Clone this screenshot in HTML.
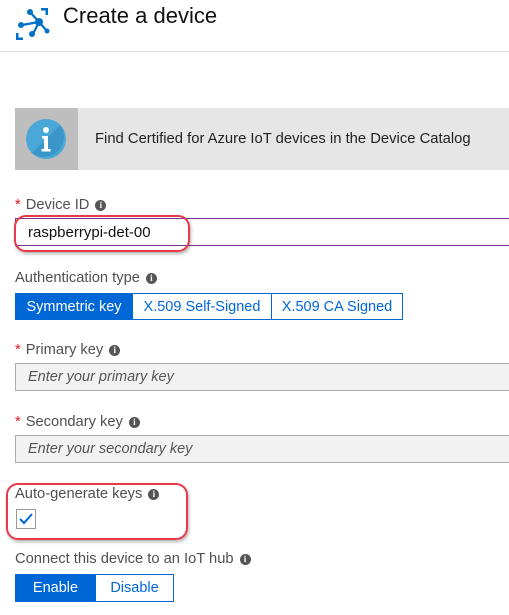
<!DOCTYPE html>
<html><head><style>
*{margin:0;padding:0;box-sizing:border-box}
body{width:509px;height:615px;background:#fff;font-family:"Segoe UI","Liberation Sans",sans-serif;position:relative;overflow:hidden;color:#222}
.a{position:absolute}
.lbl{position:absolute;left:15px;font-size:14.7px;color:#505050;white-space:nowrap}
.star{color:#e81123;margin-right:5px}
.i{display:inline-block;width:11px;height:11px;border-radius:50%;background:#555;color:#fff;font-size:9px;line-height:11px;text-align:center;font-weight:bold;font-family:"Liberation Serif",serif;margin-left:6px;vertical-align:1px}
.inp{position:absolute;left:15px;width:500px;height:28px;background:#f2f2f2;border:1px solid #aaa;font-size:14.5px;font-style:italic;color:#555;padding:5px 12px}
.btn{position:absolute;height:27px;border:1px solid #0067d6;font-size:14.5px;color:#0067d6;text-align:center;line-height:26px;background:#fff}
.on{background:#0067d6;color:#fff}
.red{position:absolute;border:2.5px solid #e8394a;border-radius:12px;box-shadow:1px 2px 3px rgba(0,0,0,.3)}
</style></head><body>
<svg class="a" style="left:14px;top:6px" width="36" height="36" viewBox="0 0 36 36">
<g fill="#0072c6"><path d="M27 2h7v7h-2.5V4.5H27z"/><path d="M2 27h2.5v4.5H9V34H2z"/>
<g stroke="#0072c6" stroke-width="2.2" fill="none"><path d="M25 16L16 6M25 16L8 19M25 16L19 28M25 16L33 25"/></g>
<circle cx="25" cy="16" r="4"/><circle cx="16" cy="6" r="3"/><circle cx="7" cy="19" r="3"/><circle cx="18" cy="28" r="3"/><circle cx="33" cy="25" r="2.5"/></g></svg>
<div class="a" style="left:63px;top:3px;font-size:22px;color:#111">Create a device</div>
<div class="a" style="left:0;top:51px;width:509px;height:1px;background:#ddd"></div>
<div class="a" style="left:15px;top:108px;width:494px;height:62px;background:#e6e6e6"></div>
<div class="a" style="left:15px;top:108px;width:63px;height:62px;background:#bebebe"></div>
<svg class="a" style="left:26px;top:119px" width="40" height="40"><circle cx="20" cy="20" r="20" fill="#4aa8d8"/><path d="M34 6A20 20 0 0 1 6 34Z" fill="#3a95c8"/><circle cx="20" cy="11" r="3" fill="#fff"/><path d="M16 17h6v13h2.5v2.5h-9V30H18V19.5h-2z" fill="#fff"/></svg>
<div class="a" style="left:95px;top:131px;font-size:14.8px;color:#222">Find Certified for Azure IoT devices in the Device Catalog</div>
<div class="lbl" style="top:197px"><span class="star">*</span>Device ID<span class="i">i</span></div>
<div class="a" style="left:15px;top:218px;width:500px;height:28px;border:1px solid #7a3a8a;font-size:15px;padding:5px 12px;color:#111">raspberrypi-det-00</div>
<div class="red" style="left:14px;top:215px;width:176px;height:37px"></div>
<div class="lbl" style="top:270px">Authentication type<span class="i">i</span></div>
<div class="btn on" style="left:15px;top:293px;width:118px">Symmetric key</div>
<div class="btn" style="left:132px;top:293px;width:140px">X.509 Self-Signed</div>
<div class="btn" style="left:271px;top:293px;width:132px">X.509 CA Signed</div>
<div class="lbl" style="top:342px"><span class="star">*</span>Primary key<span class="i">i</span></div>
<div class="inp" style="top:363px">Enter your primary key</div>
<div class="lbl" style="top:414px"><span class="star">*</span>Secondary key<span class="i">i</span></div>
<div class="inp" style="top:435px">Enter your secondary key</div>
<div class="lbl" style="top:486px">Auto-generate keys<span class="i">i</span></div>
<div class="a" style="left:16px;top:509px;width:20px;height:20px;border:1px solid #999;background:#fff"></div>
<svg class="a" style="left:18px;top:511px" width="16" height="16"><path d="M2 8l4 4 8-9" stroke="#0067d6" stroke-width="2" fill="none"/></svg>
<div class="red" style="left:6px;top:483px;width:182px;height:57px"></div>
<div class="lbl" style="top:551px">Connect this device to an IoT hub<span class="i">i</span></div>
<div class="btn on" style="left:15px;top:574px;width:81px;height:28px;line-height:27px">Enable</div>
<div class="btn" style="left:95px;top:574px;width:79px;height:28px;line-height:27px">Disable</div>
</body></html>
